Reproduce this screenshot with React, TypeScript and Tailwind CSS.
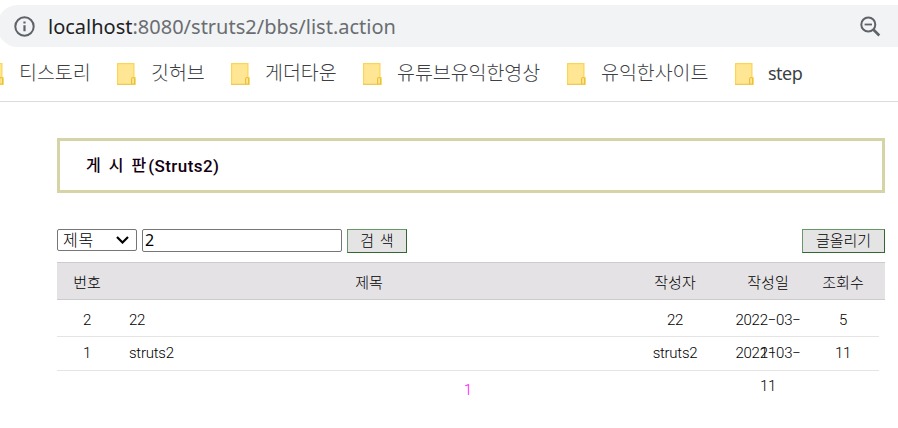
import React from "react";

const columns = "grid grid-cols-[60px_504px_108px_78px_72px]";

function Folder() {
  return (
    <svg width="20" height="22" viewBox="0 0 20 22" fill="none" className="block shrink-0">
      <path d="M.6.6h16.3v14h1.2v6.8H.6z" fill="#ffe694" stroke="#fcd653" strokeWidth="1.2" />
      <path d="M14.6 21v-5q0-1.5 1.5-1.5t1.5 1.5v5z" fill="#ffe694" stroke="#e9c03c" strokeWidth="1.2" />
      <path d="M0 21.4h15" stroke="#edc95a" strokeWidth="1.1" />
    </svg>
  );
}

function Bookmark({ label, width }: { label: string; width: string }) {
  return (
    <div className={`flex shrink-0 items-start ${width}`}>
      <Folder />
      <span className="-mt-[4px] ml-[14px] text-[19.5px] leading-[26px] tracking-[-0.05px] whitespace-nowrap">{label}</span>
    </div>
  );
}

function AddressBar() {
  return (
    <div className="-ml-[3px] flex h-[42px] items-center rounded-l-full bg-[#f1f3f4] pl-[17px]">
      <svg width="21" height="21" viewBox="0 0 21 21" className="block">
        <circle cx="10.5" cy="10.5" r="9.2" fill="none" stroke="#5f6368" strokeWidth="2" />
        <path d="M9.4 5.6h2.2v2H9.4zM9.4 9.3h2.2v6H9.4z" fill="#5f6368" />
      </svg>
      <div className="mt-[2px] ml-[13px] font-['Noto_Sans',sans-serif] text-[20px] leading-[28px] whitespace-nowrap text-[#6a6d71]">
        <span className="text-[#202124]">localhost</span>:8080/struts2/bbs/list.action
      </div>
      <svg width="21" height="21" viewBox="0 0 21 21" className="mr-[17px] ml-auto block" fill="none" stroke="#5f6368">
        <circle cx="8.3" cy="8.5" r="7" strokeWidth="2" />
        <path d="M4.6 8.5h7.4" strokeWidth="1.8" />
        <path d="m13.3 13.5 6 6" strokeWidth="2.6" />
      </svg>
    </div>
  );
}

function Post({ no, title, author, hits, sizing }: { no: string; title: string; author: string; hits: string; sizing: string }) {
  return (
    <div className={`${columns} ${sizing} w-[822px] border-b border-[#e4e4e4] text-center leading-[33px] tracking-[-0.25px]`}>
      <span>{no}</span>
      <span className="pl-3 text-left">{title}</span>
      <span>{author}</span>
      <span className="h-0 overflow-visible">2022−03−<br />11</span>
      <span>{hits}</span>
    </div>
  );
}

export default function App() {
  return (
    <div className="h-[428px] w-[898px] overflow-hidden bg-white pt-[5px] text-black">
      <AddressBar />
      <div className="flex h-[55px] items-start border-b border-[#dadce0] pt-4 font-['Noto_Sans_CJK_KR',sans-serif] font-light text-[#3c4043]">
        <div className="-ml-[15px] flex">
          <Bookmark label="티스토리" width="w-[132px]" />
          <Bookmark label="깃허브" width="w-[114px]" />
          <Bookmark label="게더타운" width="w-[132px]" />
          <Bookmark label="유튜브유익한영상" width="w-[204px]" />
          <Bookmark label="유익한사이트" width="w-[168px]" />
          <div className="flex shrink-0 items-start">
            <Folder />
            <span className="-mt-[3px] ml-[13px] font-['Noto_Sans',sans-serif] text-[18px] leading-[26px] font-normal tracking-[-0.5px]">step</span>
          </div>
        </div>
      </div>
      <main className="ml-[57px] w-[828px] pt-9 font-['Roboto','Noto_Sans_CJK_KR',sans-serif] text-[15px] font-light">
        <h1 className="flex h-[55px] items-center border-[3px] border-[#d6d3a6] pl-[26px] text-[16px] leading-[24px] font-medium text-[#120012]">
          <span className="whitespace-pre [word-spacing:4px]">게 시 판</span>
          <span className="ml-[2px] text-[17px] tracking-[0.45px]">(Struts2)</span>
        </h1>
        <div className="mt-9 flex h-[33px] items-start">
          <div className="flex h-[22px] w-[80px] items-center justify-between rounded-[2px] border border-[#767676] pr-[7px] pl-[5px] text-[16px] leading-[20px]">
            <span className="mt-[2px] tracking-[0.8px]">제목</span>
            <svg width="13" height="8" viewBox="0 0 13 8" fill="none" stroke="black" strokeWidth="2.2">
              <path d="m1 1 5.5 5.5L12 1" />
            </svg>
          </div>
          <input
            defaultValue="2"
            className="ml-[5px] h-[23px] w-[200px] rounded-[2px] border border-[#767676] bg-white px-[2px] pb-[2px] font-['Noto_Sans',sans-serif] text-[16px] leading-[20px] font-normal"
          />
          <button className="ml-[5px] h-6 w-[60px] border border-t-[#669966] border-r-[#336633] border-b-[#336633] border-l-[#669966] bg-[#e4e4e4] text-[15px] leading-[21px] [word-spacing:2px]">
            검 색
          </button>
          <button className="ml-auto h-6 w-[83px] border border-t-[#669966] border-r-[#336633] border-b-[#336633] border-l-[#669966] bg-[#e4e4e4] text-[15px] leading-[21px]">
            글올리기
          </button>
        </div>
        <div className={`${columns} h-[38px] border-y border-[#cccccc] bg-[#e4e2e5] text-center text-[15px] leading-[40px]`}>
          <span>번호</span>
          <span>제목</span>
          <span>작성자</span>
          <span>작성일</span>
          <span>조회수</span>
        </div>
        <Post no="2" title="22" author="22" hits="5" sizing="h-[37px] pt-[4px]" />
        <Post no="1" title="struts2" author="struts2" hits="11" sizing="h-[34px]" />
        <div className="w-[822px] text-center leading-[38px] text-[#ff00ff]">1</div>
      </main>
    </div>
  );
}
